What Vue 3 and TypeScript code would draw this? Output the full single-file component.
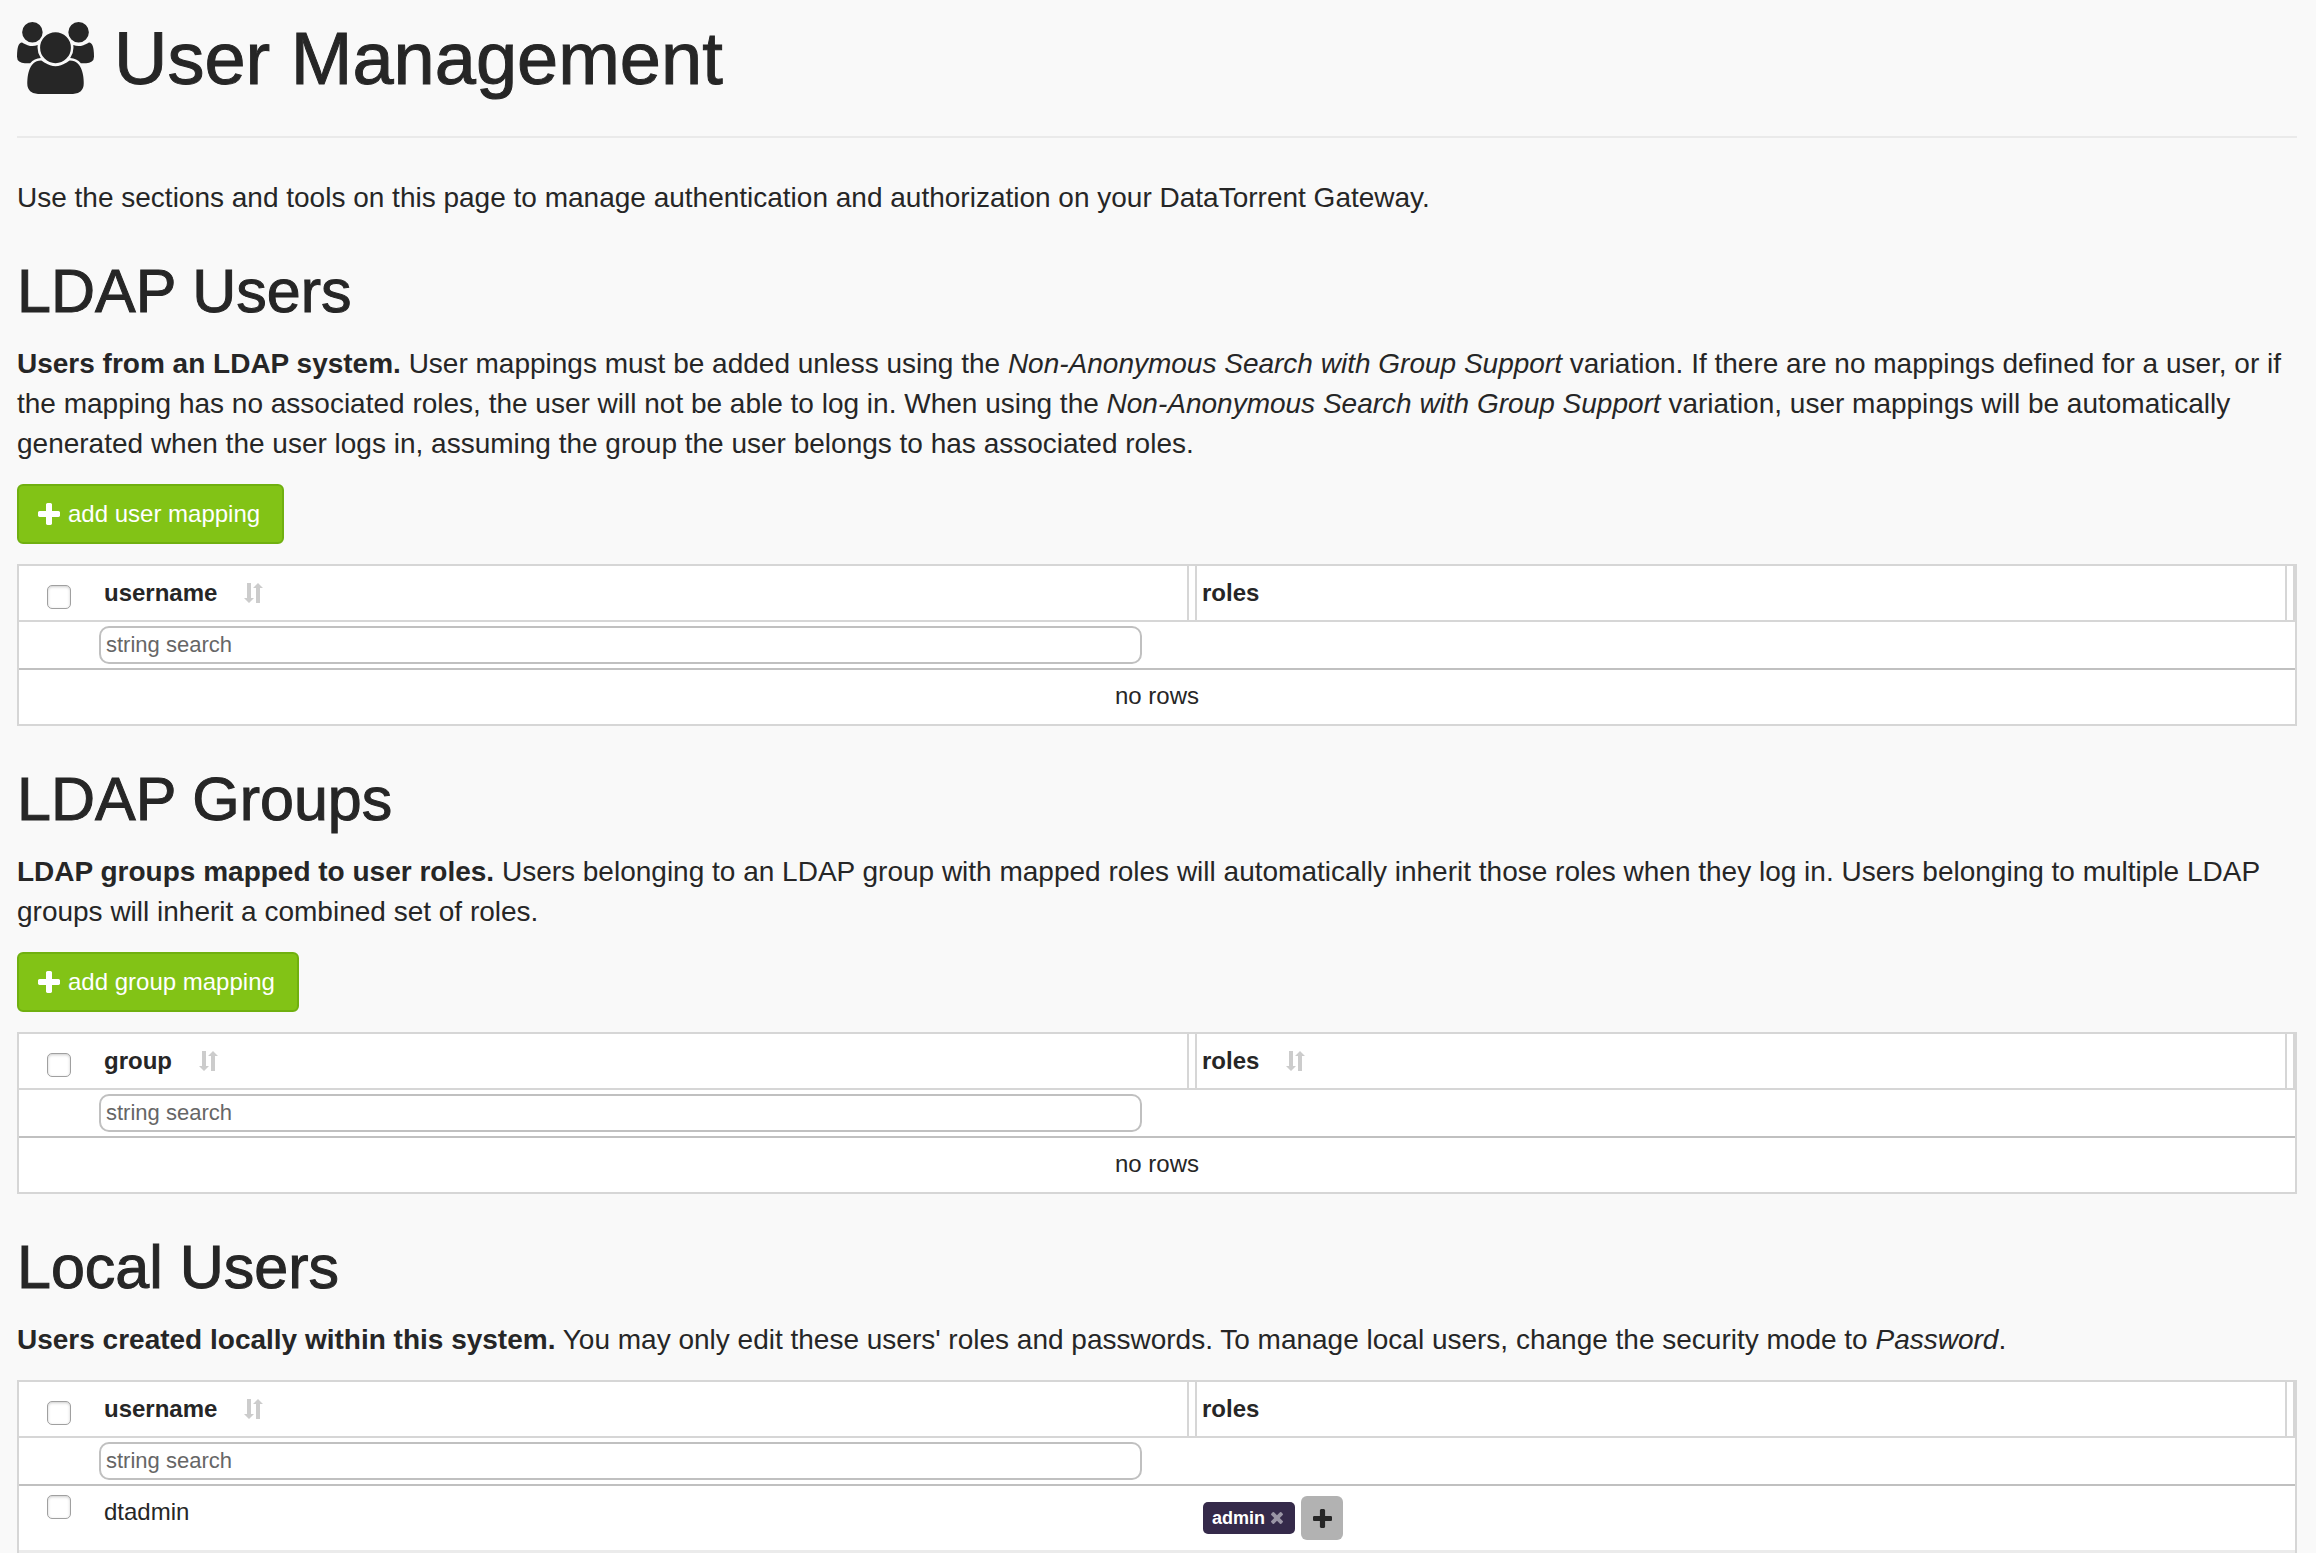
<script setup lang="ts">
import { ref } from 'vue'

interface Row {
  name: string
  roles: string[]
}

interface Section {
  id: string
  title: string
  addLabel?: string
  column: string
  rolesSortable: boolean
  rows: Row[]
}

const sections: Section[] = [
  { id: 'ldap-users', title: 'LDAP Users', addLabel: 'add user mapping', column: 'username', rolesSortable: false, rows: [] },
  { id: 'ldap-groups', title: 'LDAP Groups', addLabel: 'add group mapping', column: 'group', rolesSortable: true, rows: [] },
  { id: 'local-users', title: 'Local Users', column: 'username', rolesSortable: false, rows: [{ name: 'dtadmin', roles: ['admin'] }] },
]

const search = ref<Record<string, string>>({ 'ldap-users': '', 'ldap-groups': '', 'local-users': '' })

const plusPath =
  'M1600 736v192q0 40-28 68t-68 28h-416v416q0 40-28 68t-68 28h-192q-40 0-68-28t-28-68v-416h-416q-40 0-68-28t-28-68v-192q0-40 28-68t68-28h416v-416q0-40 28-68t68-28h192q40 0 68 28t28 68v416h416q40 0 68 28t28 68z'
const timesPath =
  'M1490 1322q0 40-28 68l-136 136q-28 28-68 28t-68-28l-294-294-294 294q-28 28-68 28t-68-28l-136-136q-28-28-28-68t28-68l294-294-294-294q-28-28-28-68t28-68l136-136q28-28 68-28t68 28l294 294 294-294q28-28 68-28t68 28l136 136q28 28 28 68t-28 68l-294 294 294 294q28 28 28 68z'
const sortPath = 'M3 0h4v15h3l-5 5-5-5h3zM12 20h4V5h3l-5-5-5 5h3z'
</script>

<template>
  <main class="page">
    <header class="page-header">
      <h1>
        <svg class="users-icon" viewBox="0 0 1920 1792" aria-hidden="true">
          <path
            d="M593 896q-162 5-265 128h-134q-82 0-138-40.500t-56-118.500q0-353 124-353 6 0 43.500 21t97.500 42.500 119 21.500q67 0 133-23-5 37-5 66 0 139 81 256zM1664 1533q0 120-73 189.500t-194 69.500h-874q-121 0-194-69.500t-73-189.500q0-53 3.500-103.500t14-109 26.500-108.500 43-97.500 62-81 85.500-53.500 111.500-20q10 0 43 21.500t73 48 107 48 135 21.500 135-21.500 107-48 73-48 43-21.500q61 0 111.500 20t85.500 53.500 62 81 43 97.500 26.500 108.500 14 109 3.500 103.500zM640 256q0 106-75 181t-181 75-181-75-75-181 75-181 181-75 181 75 75 181zM1344 640q0 159-112.500 271.500t-271.500 112.500-271.500-112.500-112.500-271.500 112.500-271.500 271.500-112.500 271.500 112.500 112.500 271.500zM1920 865q0 78-56 118.500t-138 40.500h-134q-103-123-265-128 81-117 81-256 0-29-5-66 66 23 133 23 59 0 119-21.500t97.500-42.500 43.500-21q124 0 124 353zM1792 256q0 106-75 181t-181 75-181-75-75-181 75-181 181-75 181 75 75 181z"
          />
        </svg>
        <span>User Management</span>
      </h1>
    </header>

    <p>Use the sections and tools on this page to manage authentication and authorization on your DataTorrent Gateway.</p>

    <section v-for="s in sections" :key="s.id">
      <h2>{{ s.title }}</h2>

      <p v-if="s.id === 'ldap-users'">
        <strong>Users from an LDAP system.</strong> User mappings must be added unless using the
        <em>Non-Anonymous Search with Group Support</em> variation. If there are no mappings defined for a user, or if
        the mapping has no associated roles, the user will not be able to log in. When using the
        <em>Non-Anonymous Search with Group Support</em> variation, user mappings will be automatically
        generated when the user logs in, assuming the group the user belongs to has associated roles.
      </p>
      <p v-else-if="s.id === 'ldap-groups'">
        <strong>LDAP groups mapped to user roles.</strong> Users belonging to an LDAP group with mapped roles will
        automatically inherit those roles when they log in. Users belonging to multiple LDAP
        groups will inherit a combined set of roles.
      </p>
      <p v-else>
        <strong>Users created locally within this system.</strong> You may only edit these users' roles and passwords.
        To manage local users, change the security mode to <em>Password</em>.
      </p>

      <button v-if="s.addLabel" type="button" class="add-button">
        <svg class="plus-icon" viewBox="192 128 1408 1408" aria-hidden="true"><path :d="plusPath" /></svg>
        <span>{{ s.addLabel }}</span>
      </button>

      <table :class="{ filled: s.rows.length > 0 }">
        <colgroup>
          <col class="select-col" />
          <col />
          <col />
        </colgroup>
        <thead>
          <tr>
            <th>
              <div class="head select-cell"><input type="checkbox" :aria-label="`Select all in ${s.title}`" /></div>
            </th>
            <th>
              <div class="head">
                <span>{{ s.column }}</span>
                <svg class="sort-icon" viewBox="0 0 19 20" aria-hidden="true"><path :d="sortPath" /></svg>
                <i class="resizer"></i>
              </div>
            </th>
            <th>
              <div class="head">
                <span>roles</span>
                <svg v-if="s.rolesSortable" class="sort-icon" viewBox="0 0 19 20" aria-hidden="true"><path :d="sortPath" /></svg>
                <i class="resizer"></i>
              </div>
            </th>
          </tr>
          <tr class="filters">
            <td></td>
            <td>
              <input v-model="search[s.id]" type="text" class="search" placeholder="string search" :aria-label="`Search ${s.column}`" />
            </td>
            <td></td>
          </tr>
        </thead>
        <tbody>
          <tr v-if="!s.rows.length">
            <td colspan="3" class="empty">no rows</td>
          </tr>
          <tr v-for="row in s.rows" :key="row.name" class="row">
            <td>
              <div class="cell select-cell"><input type="checkbox" :aria-label="`Select ${row.name}`" /></div>
            </td>
            <td><div class="cell">{{ row.name }}</div></td>
            <td>
              <div class="cell roles">
                <button v-for="role in row.roles" :key="role" type="button" class="role">
                  <span>{{ role }}</span>
                  <svg class="times-icon" viewBox="302 366 1188 1188" aria-hidden="true"><path :d="timesPath" /></svg>
                </button>
                <button type="button" class="add-role" aria-label="Add role">
                  <svg viewBox="192 128 1408 1408" aria-hidden="true"><path :d="plusPath" /></svg>
                </button>
              </div>
            </td>
          </tr>
        </tbody>
      </table>
    </section>
  </main>
</template>

<style>
body {
  margin: 0;
  background: #f9f9f9;
}
</style>

<style scoped>
.page {
  padding: 20px 19px 0 17px;
  color: #262626;
  font: 28px/40px "Liberation Sans", Arial, sans-serif;
}

svg {
  display: block;
  flex: none;
  fill: currentColor;
}

.page-header {
  padding-bottom: 38px;
  margin-bottom: 40px;
  border-bottom: 2px solid #eaeaea;
}

h1,
h2 {
  margin: 0;
  font-weight: 500;
  -webkit-text-stroke: 1px currentColor;
}

h1 {
  display: flex;
  gap: 20px;
  font-size: 74px;
  line-height: 78px;
}

.users-icon {
  width: 77px;
  height: 72px;
  margin-top: 2px;
}

h2 {
  margin: 40px 0 20px;
  font-size: 61px;
  line-height: 66px;
}

p {
  margin: 0 0 20px;
}

button {
  border: 0;
  margin: 0;
  font-family: inherit;
  cursor: pointer;
}

.add-button {
  display: flex;
  align-items: center;
  gap: 8px;
  height: 60px;
  margin-bottom: 20px;
  padding: 0 22px 0 19px;
  border: 2px solid #70b010;
  border-radius: 6px;
  background: #82c316;
  color: #fff;
  font-size: 24px;
}

.plus-icon {
  width: 22px;
  height: 22px;
}

table {
  width: 100%;
  table-layout: fixed;
  border: 2px solid #d6d6d6;
  border-collapse: separate;
  border-spacing: 0;
  background: #fff;
  font-size: 24px;
  line-height: 34px;
}

table.filled {
  border-bottom: 0;
}

.select-col {
  width: 80px;
}

th,
td {
  padding: 0;
  text-align: left;
  vertical-align: top;
}

th {
  border-bottom: 2px solid #d6d6d6;
}

.head {
  display: flex;
  align-items: center;
  height: 54px;
  padding-left: 5px;
}

.sort-icon {
  width: 19px;
  height: 20px;
  margin-left: 27px;
  fill: #ccc;
}

.resizer {
  align-self: stretch;
  width: 6px;
  margin-left: auto;
  border: solid #d6d6d6;
  border-width: 0 2px;
}

.select-cell {
  padding: 8px 0 0 28px;
  box-sizing: border-box;
}

input {
  box-sizing: border-box;
  margin: 0;
  font-family: inherit;
}

input[type="checkbox"] {
  appearance: none;
  flex: none;
  width: 24px;
  height: 24px;
  border: 1px solid #a0a0a0;
  border-radius: 5px;
  background: #fff;
  box-shadow: inset 0 1px 3px #ccc;
}

.filters td {
  height: 46px;
  border-bottom: 2px solid #c0c0c0;
}

.search {
  display: block;
  width: 95%;
  height: 38px;
  margin-top: 4px;
  padding: 0 5px;
  border: 2px solid #c0c0c0;
  border-radius: 10px;
  background: #fff;
  color: #262626;
  font-size: 22px;
}

.search::placeholder {
  color: #666;
  opacity: 1;
}

.empty {
  padding: 9px 0 11px;
  text-align: center;
}

.row td {
  height: 64px;
  border-bottom: 3px solid #ebebeb;
}

.cell {
  padding: 9px 5px 0;
}

.cell.select-cell {
  display: flex;
  padding: 9px 0 0 28px;
}

.cell.roles {
  display: flex;
  align-items: center;
  gap: 6px;
  padding: 10px 6px 0;
}

.role {
  display: flex;
  align-items: center;
  gap: 6px;
  height: 32px;
  padding: 0 12px 0 9px;
  border-radius: 5px;
  background: #352a4a;
  color: #fff;
  font-size: 18px;
  font-weight: 700;
}

.times-icon {
  width: 12px;
  height: 12px;
  fill: #9a95a5;
}

.add-role {
  display: flex;
  align-items: center;
  justify-content: center;
  width: 42px;
  height: 44px;
  padding: 0;
  border-radius: 6px;
  background: #b2b2b2;
  color: #262626;
}

.add-role svg {
  width: 19px;
  height: 19px;
}
</style>
